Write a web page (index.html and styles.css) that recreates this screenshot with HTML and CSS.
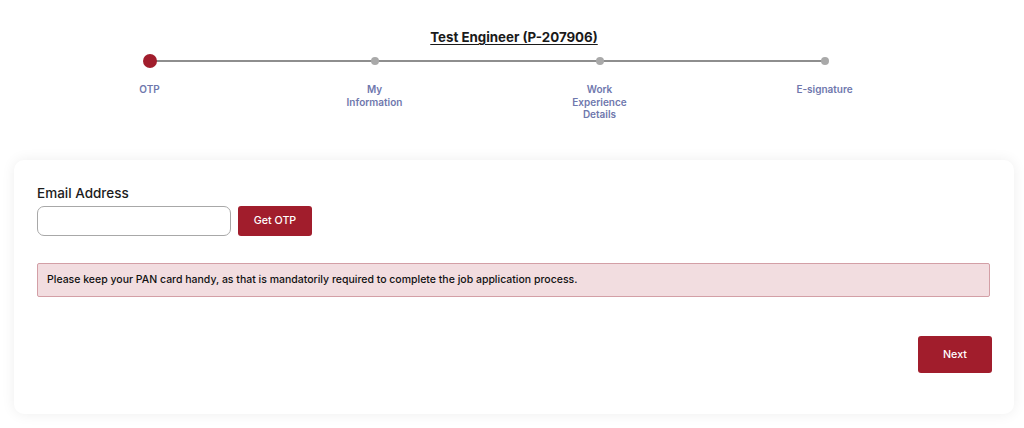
FILE: index.html
```html
<!DOCTYPE html>
<html lang="en">
<head>
<meta charset="utf-8">
<title>Test Engineer (P-207906)</title>
<link rel="stylesheet" href="styles.css">
</head>
<body>
<header class="header">
  <h1 class="title">Test Engineer (P-207906)</h1>
  <ol class="stepper">
    <li class="step active"><span class="dot"></span><span class="label">OTP</span></li>
    <li class="step"><span class="dot"></span><span class="label">My<br>Information</span></li>
    <li class="step"><span class="dot"></span><span class="label">Work<br>Experience<br>Details</span></li>
    <li class="step"><span class="dot"></span><span class="label">E-signature</span></li>
  </ol>
</header>
<main class="card">
  <label class="field-label" for="email">Email Address</label>
  <div class="input-row">
    <input id="email" class="input" type="email">
    <button class="btn btn-otp" type="button">Get OTP</button>
  </div>
  <div class="alert">Please keep your PAN card handy, as that is mandatorily required to complete the job application process.</div>
  <div class="actions">
    <button class="btn btn-next" type="button">Next</button>
  </div>
</main>
</body>
</html>
```

FILE: styles.css
```css
* { box-sizing: border-box; }
html, body { margin: 0; padding: 0; background: #ffffff; }
body {
  font-family: Inter, "Noto Sans", "Liberation Sans", sans-serif;
  color: #1a1a1a;
  width: 1024px;
  height: 428px;
  overflow: hidden;
}
.header { padding-top: 28px; }
.title {
  margin: 0;
  text-align: center;
  padding-left: 4px;
  font-size: 13.3px;
  line-height: 18px;
  font-weight: 700;
  color: #1a1a1a;
  text-decoration: underline;
  text-underline-offset: 2px;
}
.stepper {
  list-style: none;
  margin: 8px 0 0 37px;
  padding: 0;
  display: grid;
  grid-template-columns: repeat(4, 225px);
}
.step {
  position: relative;
  display: flex;
  flex-direction: column;
  align-items: center;
}
.step:not(:last-child)::after {
  content: "";
  position: absolute;
  left: 50%;
  width: 100%;
  top: 6px;
  height: 2px;
  background: #8e8e8e;
  z-index: 0;
}
.dot {
  position: relative;
  z-index: 1;
  width: 14px;
  height: 14px;
  display: flex;
  align-items: center;
  justify-content: center;
}
.dot::before {
  content: "";
  width: 8px;
  height: 8px;
  border-radius: 50%;
  background: #a9a9a9;
}
.step.active .dot::before {
  width: 14px;
  height: 14px;
  background: #a11d2c;
}
.label {
  margin-top: 15px;
  font-size: 10px;
  line-height: 12.5px;
  font-weight: 600;
  color: #6f78ad;
  text-align: center;
}
.card {
  margin: 39px 10px 0 14px;
  height: 254px;
  background: #ffffff;
  border-radius: 10px;
  box-shadow: 0 0 14px rgba(0, 0, 0, 0.07);
  padding: 25px 24px 0 23px;
  display: flex;
  flex-direction: column;
}
.field-label {
  font-size: 13.5px;
  line-height: 17px;
  font-weight: 500;
  color: #1c1c1c;
}
.input-row {
  display: flex;
  gap: 7px;
  margin-top: 4px;
}
.input {
  width: 194px;
  height: 30px;
  border: 1px solid #a8a8a8;
  border-radius: 7px;
  background: #fff;
  margin: 0;
}
.btn {
  font-family: Inter, "Noto Sans", "Liberation Sans", sans-serif;
  border: none;
  color: #fff;
  background: #a11d2c;
  border-radius: 3px;
  font-size: 10.7px;
  font-weight: 500;
  cursor: pointer;
}
.btn-otp { width: 74px; height: 30px; }
.alert {
  margin-top: 27px;
  height: 34px;
  background: #f2dde0;
  border: 1px solid #d39fa6;
  border-radius: 2px;
  padding: 0 9px;
  display: flex;
  align-items: center;
  font-size: 10.5px;
  font-weight: 500;
  color: #111;
}
.actions {
  display: flex;
  justify-content: flex-end;
  margin-top: 39px;
}
.btn-next { width: 74px; height: 37px; margin-right: -2px; }
```
